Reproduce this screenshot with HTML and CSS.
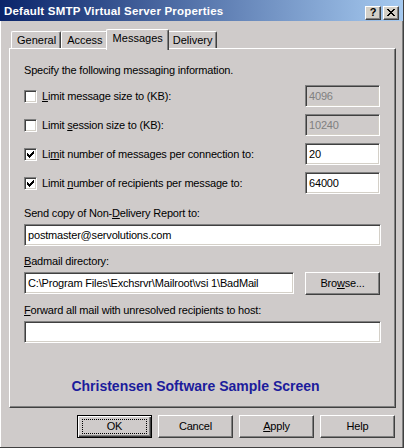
FILE: index.html
```html
<!DOCTYPE html>
<html>
<head>
<meta charset="utf-8">
<link rel="stylesheet" href="styles.css">
</head>
<body>
<div class="window">
  <div class="titlebar">
    <span class="title">Default SMTP Virtual Server Properties</span>
    <div class="capbtns">
      <span class="capbtn q">?</span>
      <span class="capbtn x"><svg width="8" height="7" viewBox="0 0 8 7"><path d="M0 0h2v1h1v1h2v-1h1v-1h2v1h-1v1h-1v1h-1v1h1v1h1v1h1v1h-2v-1h-1v-1h-2v1h-1v1h-2v-1h1v-1h1v-1h1v-1h-1v-1h-1v-1h-1z" fill="#000"/></svg></span>
    </div>
  </div>
  <div class="body">
    <div class="tabs">
      <div class="tab">General</div>
      <div class="tab">Access</div>
      <div class="tab active">Messages</div>
      <div class="tab">Delivery</div>
    </div>
    <div class="panel">
      <div class="intro">Specify the following messaging information.</div>
      <div class="rows">
        <div class="row">
          <label class="cb"><span class="box"></span><span><u>L</u>imit message size to (KB):</span></label>
          <div class="field small disabled">4096</div>
        </div>
        <div class="row">
          <label class="cb"><span class="box"></span><span>Limit <u>s</u>ession size to (KB):</span></label>
          <div class="field small disabled">10240</div>
        </div>
        <div class="row">
          <label class="cb"><span class="box checked"><svg width="7" height="7" viewBox="0 0 7 7"><path d="M0 2h1v1h1v1h1v-1h1v-1h1v-1h1v-1h1v3h-1v1h-1v1h-1v1h-1v1h-1v-1h-1v-1h-1z" fill="#000"/></svg></span><span>Li<u>m</u>it number of messages per connection to:</span></label>
          <div class="field small">20</div>
        </div>
        <div class="row">
          <label class="cb"><span class="box checked"><svg width="7" height="7" viewBox="0 0 7 7"><path d="M0 2h1v1h1v1h1v-1h1v-1h1v-1h1v-1h1v3h-1v1h-1v1h-1v1h-1v1h-1v-1h-1v-1h-1z" fill="#000"/></svg></span><span>Limit <u>n</u>umber of recipients per message to:</span></label>
          <div class="field small">64000</div>
        </div>
      </div>
      <div class="lbl ndr">Send copy of Non-<u>D</u>elivery Report to:</div>
      <div class="field full">postmaster@servolutions.com</div>
      <div class="lbl"><u>B</u>admail directory:</div>
      <div class="pathrow">
        <div class="field path">C:\Program Files\Exchsrvr\Mailroot\vsi 1\BadMail</div>
        <div class="btn browse">Bro<u>w</u>se...</div>
      </div>
      <div class="lbl"><u>F</u>orward all mail with unresolved recipients to host:</div>
      <div class="field full"></div>
      <div class="brand">Christensen Software Sample Screen</div>
    </div>
    <div class="buttons">
      <div class="btn default"><span class="focus">OK</span></div>
      <div class="btn">Cancel</div>
      <div class="btn"><u>A</u>pply</div>
      <div class="btn">Help</div>
    </div>
  </div>
</div>
</body>
</html>
```
FILE: styles.css
```css
* { box-sizing: border-box; }
html, body { margin: 0; padding: 0; }
body {
  background: #cfcbca;
  font-family: "Liberation Sans", Arial, sans-serif;
  font-size: 11px;
  letter-spacing: -0.18px;
  color: #000;
}
u { text-decoration: underline; text-underline-offset: 1px; }

.window {
  width: 404px;
  height: 448px;
  background: #cfcbca;
  border-right: 1px solid #404040;
  border-bottom: 1px solid #404040;
  display: flex;
  flex-direction: column;
}

.titlebar {
  height: 21px;
  flex: none;
  background: linear-gradient(to right, #0a246a, #a6caf0);
  display: flex;
  align-items: center;
  padding: 1px 4px 0 4px;
  justify-content: space-between;
}
.title {
  color: #fff;
  font-family: "Liberation Sans", Arial, sans-serif;
  font-weight: bold;
  font-size: 11.5px;
  letter-spacing: 0.2px;
}
.capbtns { display: flex; gap: 2px; margin-top: 3px; }
.capbtn {
  width: 16px;
  height: 14px;
  background: #d4d0c8;
  border-top: 1px solid #fff;
  border-left: 1px solid #fff;
  border-right: 1px solid #404040;
  border-bottom: 1px solid #404040;
  box-shadow: inset -1px -1px #808080;
  display: flex;
  align-items: center;
  justify-content: center;
  font-weight: bold;
  font-size: 11px;
  letter-spacing: 0;
  line-height: 1;
  padding-bottom: 1px;
}
.capbtn svg { display: block; }

.body {
  flex: 1;
  border-left: 1px solid #fff;
  box-shadow: inset -1px 0 #808080;
  padding: 8px 7px 0 8px;
  display: flex;
  flex-direction: column;
}

.tabs {
  display: flex;
  align-items: flex-end;
  height: 19px;
  padding-left: 2px;
  position: relative;
  z-index: 1;
}
.tab {
  height: 17px;
  padding: 2px 4px 0 5px;
  border-top: 1px solid #fff;
  border-left: 1px solid #fff;
  border-right: 1px solid #404040;
  box-shadow: inset -1px 0 #808080;
  border-radius: 2px 2px 0 0;
  background: #cfcbca;
  line-height: 13px;
  letter-spacing: 0;
}
.tab.active {
  height: 21px;
  margin: 0 -2px -2px -2px;
  padding: 2px 5px 0 6px;
  position: relative;
}

.panel {
  height: 360px;
  width: 387px;
  border-top: 1px solid #fff;
  border-left: 1px solid #fff;
  border-right: 1px solid #404040;
  border-bottom: 1px solid #404040;
  box-shadow: inset -1px -1px #808080;
  padding: 0 14px 0 14px;
  display: flex;
  flex-direction: column;
}
.intro { margin-top: 15px; line-height: 13px; }

.rows { display: flex; flex-direction: column; gap: 7px; margin-top: 8px; }
.row {
  display: flex;
  justify-content: space-between;
  align-items: center;
  height: 22px;
}
.cb { display: flex; align-items: center; gap: 5px; }
.box {
  width: 13px;
  height: 13px;
  background: #fff;
  border-top: 1px solid #808080;
  border-left: 1px solid #808080;
  border-right: 1px solid #fff;
  border-bottom: 1px solid #fff;
  box-shadow: inset 1px 1px #404040, inset -1px -1px #d4d0c8;
  display: flex;
  align-items: center;
  justify-content: center;
}
.box svg { display: block; }

.field {
  height: 22px;
  background: #fff;
  border-top: 1px solid #808080;
  border-left: 1px solid #808080;
  border-right: 1px solid #fff;
  border-bottom: 1px solid #fff;
  box-shadow: inset 1px 1px #404040, inset -1px -1px #d4d0c8;
  padding: 0 3px;
  line-height: 20px;
  white-space: nowrap;
  overflow: hidden;
}
.field.small { width: 75px; margin-right: 1px; }
.field.disabled { background: #cfcbca; color: #808080; }
.field.full { width: 357px; }
.field.path { width: 270px; }

.lbl { line-height: 13px; margin-top: 9px; margin-bottom: 4px; }
.lbl.ndr { margin-top: 13px; }

.pathrow { display: flex; justify-content: space-between; width: 357px; }

.btn {
  width: 75px;
  height: 23px;
  background: #cfcbca;
  border-top: 1px solid #fff;
  border-left: 1px solid #fff;
  border-right: 1px solid #404040;
  border-bottom: 1px solid #404040;
  box-shadow: inset -1px -1px #808080;
  display: flex;
  align-items: center;
  justify-content: center;
  line-height: 13px;
}
.btn.browse { height: 23px; margin-right: 1px; }
.btn.default {
  border: 1px solid #000;
  box-shadow: inset 1px 1px #fff, inset -1px -1px #404040, inset -2px -2px #808080;
}
.focus {
  display: flex;
  align-items: center;
  justify-content: center;
  width: 65px;
  height: 15px;
  border: 1px dotted #000;
}

.brand {
  margin-top: auto;
  margin-bottom: 13px;
  padding-right: 14px;
  text-align: center;
  color: #1c1c9c;
  font-weight: bold;
  font-size: 14px;
  letter-spacing: 0;
  line-height: 15px;
}

.buttons {
  display: flex;
  justify-content: flex-end;
  gap: 6px;
  margin-top: 7px;
  padding-right: 1px;
}
```
